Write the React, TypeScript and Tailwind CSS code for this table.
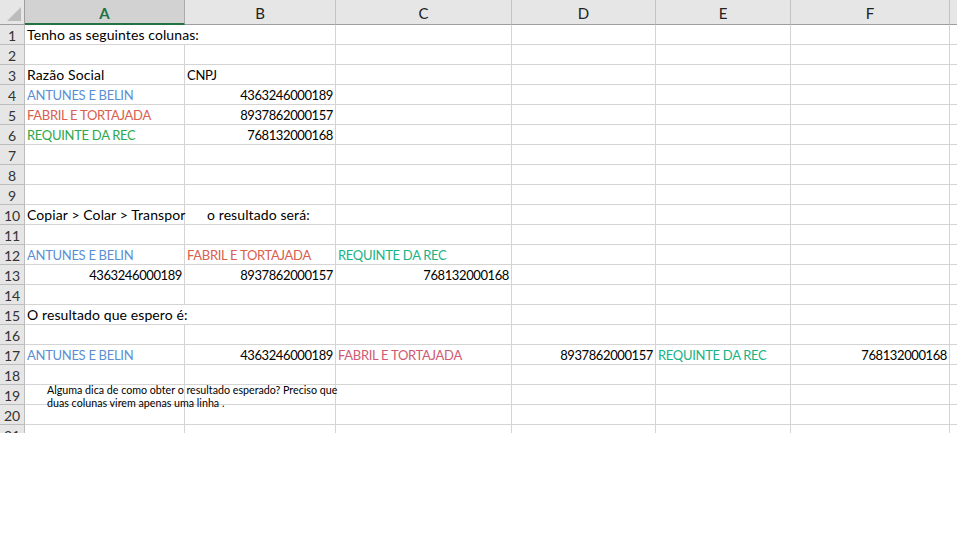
import React from "react";

type Cell = { t: string; c?: string; r?: boolean; span?: number; pl?: string; k?: "caps" | "num" };

const BLUE = "text-[#5b8fd4]";
const RED = "text-[#d9604e]";
const GREEN = "text-[#2ea84c]";
const TEAL = "text-[#18b386]";
const PINK = "text-[#cf5a72]";

const rows: Record<number, (Cell | null)[]> = {
  1: [{ t: "Tenho as seguintes colunas:", span: 2 }],
  3: [{ t: "Razão Social" }, { t: "CNPJ", k: "caps" }],
  4: [{ t: "ANTUNES E BELIN", c: BLUE, k: "caps" }, { t: "4363246000189", r: true, k: "num" }],
  5: [{ t: "FABRIL E TORTAJADA", c: RED, k: "caps" }, { t: "8937862000157", r: true, k: "num" }],
  6: [{ t: "REQUINTE DA REC", c: GREEN, k: "caps" }, { t: "768132000168", r: true, k: "num" }],
  10: [{ t: "Copiar > Colar > Transpor" }, { t: "o resultado será:", pl: "pl-[22px]" }],
  12: [
    { t: "ANTUNES E BELIN", c: BLUE, k: "caps" },
    { t: "FABRIL E TORTAJADA", c: RED, k: "caps" },
    { t: "REQUINTE DA REC", c: TEAL, k: "caps" },
  ],
  13: [
    { t: "4363246000189", r: true, k: "num" },
    { t: "8937862000157", r: true, k: "num" },
    { t: "768132000168", r: true, k: "num" },
  ],
  15: [{ t: "O resultado que espero é:", span: 2 }],
  17: [
    { t: "ANTUNES E BELIN", c: BLUE, k: "caps" },
    { t: "4363246000189", r: true, k: "num" },
    { t: "FABRIL E TORTAJADA", c: PINK, k: "caps" },
    { t: "8937862000157", r: true, k: "num" },
    { t: "REQUINTE DA REC", c: TEAL, k: "caps" },
    { t: "768132000168", r: true, k: "num" },
  ],
};

const cols = ["A", "B", "C", "D", "E", "F"];

function sizeClass(k?: "caps" | "num") {
  if (k === "caps") return "text-[13px] tracking-[-0.3px]";
  if (k === "num") return "text-[13px] tracking-[-0.4px]";
  return "text-[14px] tracking-[0.1px]";
}

function DataRow({ n }: { n: number }) {
  const cells = rows[n] || [];
  const out: React.ReactNode[] = [];
  let col = 0;
  let i = 0;
  while (col < 7) {
    const cell = cells[i];
    i++;
    if (col < 6 && cell) {
      const span = cell.span || 1;
      out.push(
        <div
          key={col}
          className={`h-[20px] border-r border-b border-[#d4d4d4] flex items-end pb-[1px] overflow-visible whitespace-nowrap leading-[16px] ${
            span === 2 ? "col-span-2" : ""
          } ${cell.r ? "justify-end pr-[2px]" : cell.pl ? cell.pl : "pl-[2px]"} ${cell.c || "text-black"} ${sizeClass(cell.k)}`}
        >
          {cell.t}
        </div>
      );
      col += span;
    } else {
      out.push(
        <div
          key={col}
          className={`h-[20px] border-b border-[#d4d4d4] ${col < 6 ? "border-r" : ""}`}
        />
      );
      col += 1;
    }
  }
  return (
    <>
      <div className="h-[20px] bg-[#e6e6e6] border-r border-b border-[#bdbdbd] flex items-center justify-center pt-[2px] text-[#333] text-[14px] leading-none">
        {n}
      </div>
      {out}
    </>
  );
}

export default function App() {
  const nums = Array.from({ length: 21 }, (_, k) => k + 1);
  return (
    <div className="w-[957px] h-[540px] bg-white overflow-hidden">
      <div
        className="relative h-[433px] overflow-hidden text-[15px] text-black"
        style={{ fontFamily: "Lato, 'Liberation Sans', sans-serif" }}
      >
        <div className="grid grid-cols-[25px_160px_151px_176px_144px_135px_159px_1fr]">
          <div className="relative h-[25px] bg-[#e6e6e6] border-r border-b border-[#9e9e9e]">
            <div className="absolute right-[3px] bottom-[3px] w-0 h-0 border-l-[14px] border-l-transparent border-b-[14px] border-b-[#bcbcbc]" />
          </div>
          {cols.map((c) =>
            c === "A" ? (
              <div
                key={c}
                className="h-[25px] bg-[#d2d2d2] border-r border-[#ababab] border-b-2 border-b-[#217346] flex items-center justify-center pt-[3px] text-[#217346] font-bold"
              >
                {c}
              </div>
            ) : (
              <div
                key={c}
                className="h-[25px] bg-[#e6e6e6] border-r border-[#c4c4c4] border-b border-b-[#9e9e9e] flex items-center justify-center pt-[3px] text-[#222]"
              >
                {c}
              </div>
            )
          )}
          <div className="h-[25px] bg-[#e6e6e6] border-b border-[#9e9e9e]" />
          {nums.map((n) => (
            <DataRow key={n} n={n} />
          ))}
        </div>
        <div className="absolute left-[47px] top-[383px] text-[10.7px] leading-[13px] text-black whitespace-nowrap">
          <div>Alguma dica de como obter o resultado esperado? Preciso que</div>
          <div>duas colunas virem apenas uma linha .</div>
        </div>
      </div>
    </div>
  );
}
